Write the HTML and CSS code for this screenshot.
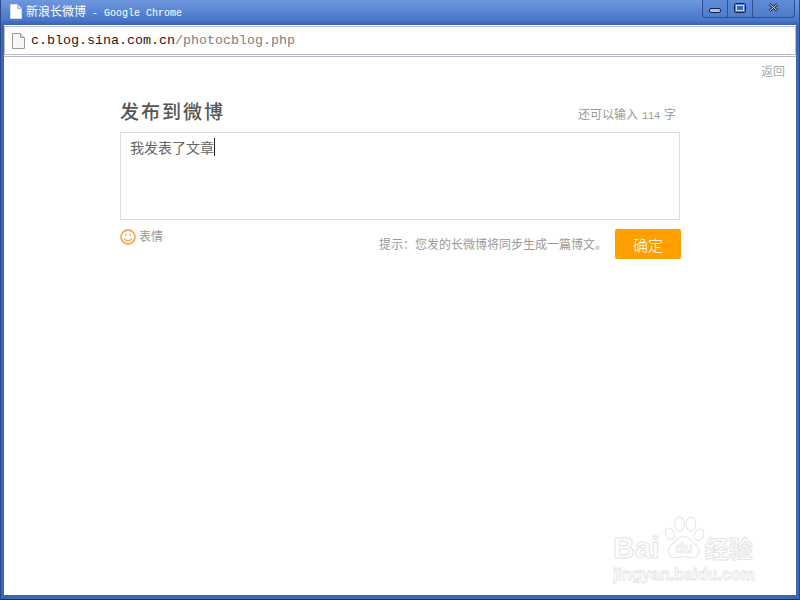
FILE: index.html
```html
<!DOCTYPE html>
<html lang="zh-CN">
<head>
<meta charset="utf-8">
<title>新浪长微博 - Google Chrome</title>
<link rel="stylesheet" href="styles.css">
</head>
<body>
<div class="window">
  <header class="titlebar">
    <svg class="page-icon" width="12" height="15" viewBox="0 0 12 15"><path d="M.5.5h7l4 4v10H.5z" fill="#fff" stroke="#d5deee"/><path d="M7.5.5v4h4" fill="#cfd6e2" stroke="#aab4c6"/></svg>
    <span class="title-text">新浪长微博<span class="title-latin"> - Google Chrome</span></span>
    <div class="controls">
      <div class="ctrl ctrl-min"><svg width="12" height="5" viewBox="0 0 12 5"><rect x=".5" y=".5" width="11" height="4" rx="1.5" fill="#a9c0e8" stroke="#14264f"/></svg></div>
      <div class="ctrl ctrl-max"><svg width="12" height="10" viewBox="0 0 12 10"><rect x=".5" y=".5" width="11" height="9" rx="1" fill="none" stroke="#14264f"/><rect x="2.5" y="2.5" width="7" height="5" fill="#3f68b5" stroke="#c9d8f2"/></svg></div>
      <div class="ctrl ctrl-close"><svg width="11" height="9" viewBox="0 0 11 9"><path d="M1.5 1l8 7M9.5 1l-8 7" fill="none" stroke="#14264f" stroke-width="2.6"/><path d="M1.5 1l8 7M9.5 1l-8 7" fill="none" stroke="#dfe8f8" stroke-width="1"/></svg></div>
    </div>
  </header>
  <div class="addressbar">
    <div class="omnibox">
      <svg class="doc-icon" width="13" height="16" viewBox="0 0 13 16"><path d="M.5.5h8l4 4v11H.5z" fill="#f6f6f6" stroke="#9a9a9a"/><path d="M8.5.5v4h4" fill="#ddd" stroke="#9a9a9a"/></svg>
      <span class="url"><span class="url-host">c.blog.sina.com.cn</span>/photocblog.php</span>
    </div>
  </div>
  <main class="content">
    <div class="back-row"><a class="back">返回</a></div>
    <section class="panel">
      <div class="panel-head">
        <h1 class="panel-title">发布到微博</h1>
        <span class="counter">还可以输入<span class="mono">114</span>字</span>
      </div>
      <div class="editor"><span class="editor-text">我发表了文章</span></div>
      <div class="panel-foot">
        <div class="emote">
          <svg width="16" height="16" viewBox="0 0 16 16"><circle cx="8" cy="8" r="7" fill="#fff" stroke="#f7ae4f" stroke-width="1.8"/><circle cx="5.6" cy="6.2" r=".9" fill="#f7ae4f"/><circle cx="10.4" cy="6.2" r=".9" fill="#f7ae4f"/><path d="M4.2 9.2c1 3 6.6 3 7.6 0" fill="none" stroke="#f7ae4f" stroke-width="1.2"/></svg>
          <span class="emote-label">表情</span>
        </div>
        <div class="submit-group">
          <span class="hint">提示：您发的长微博将同步生成一篇博文。</span>
          <button class="confirm">确定</button>
        </div>
      </div>
    </section>
    <div class="watermark">
      <div class="wm-top">
        <span class="wm-bai">Bai</span>
        <svg class="wm-paw" width="44" height="50" viewBox="0 0 50 54"><g fill="#fff" stroke="#e6e6e6" stroke-width="1.2"><ellipse cx="9" cy="20" rx="5" ry="7" transform="rotate(-25 9 20)"/><ellipse cx="20" cy="9" rx="5.5" ry="8"/><ellipse cx="33" cy="9" rx="5.5" ry="8"/><ellipse cx="42" cy="21" rx="5" ry="7" transform="rotate(25 42 21)"/><path d="M25 23c7 0 9 6 14 10 6 5 3 14-5 14-4 0-6-1-9-1s-6 1-10 1c-8 0-10-9-5-14 5-3 7-10 15-10z"/></g><text x="25" y="42" text-anchor="middle" class="wm-du">du</text></svg>
        <span class="wm-cjk">经验</span>
      </div>
      <div class="wm-url">jingyan.baidu.com</div>
    </div>
  </main>
</div>
</body>
</html>
```
FILE: styles.css
```css
* { box-sizing: border-box; }
html, body { margin: 0; padding: 0; }
body {
  width: 800px;
  height: 600px;
  overflow: hidden;
  font-family: "Noto Sans CJK SC", "Liberation Sans", sans-serif;
}
.window {
  width: 800px;
  height: 600px;
  display: flex;
  flex-direction: column;
  background: #3d66b4;
  padding: 0 4px 4px;
  border-left: 1px solid #2a4a8a;
  border-right: 1px solid #2a4a8a;
  border-bottom: 1px solid #1f2f55;
  position: relative;
}
.titlebar {
  height: 25px;
  margin: 0 -4px;
  padding: 3px 4px 0 9px;
  background: linear-gradient(#6e97dc 0, #5a88d6 40%, #4a78c8 80%, #3a62b0 100%);
  display: flex;
  align-items: flex-start;
  flex: none;
}
.page-icon { flex: none; margin-top: 1px; }
.title-text {
  margin-left: 4px;
  color: #fff;
  font-size: 12px;
  line-height: 16px;
  white-space: pre;
}
.title-latin { font-family: "Liberation Mono", monospace; font-size: 10px; }
.controls {
  margin: -3px 0 0 auto;
  display: flex;
  height: 18px;
  width: 93px;
  border: 1px solid #2f4f92;
  border-top: 0;
  border-radius: 0 0 4px 4px;
  background: linear-gradient(#5f8bd8, #4f7cc9);
}
.ctrl { display: flex; align-items: center; justify-content: center; border-right: 1px solid #2f4f92; }
.ctrl-min { width: 25px; padding-top: 4px; }
.ctrl-max { width: 25px; padding-bottom: 2px; }
.ctrl-close { flex: 1; border-right: 0; padding-bottom: 2px; }
.addressbar {
  height: 32px;
  flex: none;
  padding: 1px 0 0;
  margin: 0 -1px;
  background: #fff;
  border-bottom: 1px solid #b4b8c0;
}
.omnibox {
  height: 29px;
  background: #fff;
  border: 1px solid #b8bcc4;
  display: flex;
  align-items: center;
  padding-left: 7px;
}
.doc-icon { flex: none; }
.url {
  margin-left: 6px;
  font-family: "Liberation Mono", monospace;
  font-size: 13.33px;
  color: #808080;
}
.url-host { color: #1a1a1a; }
.content {
  flex: 1;
  margin: 0 -1px;
  background: #fff;
  min-height: 0;
  position: relative;
}
.back-row {
  display: flex;
  justify-content: flex-end;
  padding: 6px 11px 0 0;
  height: 45px;
}
.back { font-size: 12px; line-height: 16px; color: #aaa; }
.panel { width: 560px; margin-left: 116px; }
.panel-head {
  display: flex;
  justify-content: space-between;
  align-items: flex-end;
  height: 30px;
  padding-right: 4px;
}
.panel-title {
  margin: 0;
  font-size: 19px;
  line-height: 22px;
  letter-spacing: 2px;
  font-weight: 500;
  color: #555;
  padding-bottom: 10px;
}
.counter { font-size: 12px; line-height: 16px; color: #999; padding-bottom: 7px; }
.mono { font-family: "Liberation Mono", monospace; font-size: 10px; margin: 0 4px; }
.editor {
  height: 88px;
  border: 1px solid #ddd;
  padding: 5px 9px;
  font-size: 14px;
  line-height: 18px;
  color: #666;
}
.editor-text { border-right: 1px solid #222; display: inline-block; height: 18px; }
.panel-foot {
  display: flex;
  justify-content: space-between;
  align-items: flex-start;
  padding-top: 9px;
}
.emote {
  display: flex;
  align-items: center;
  gap: 3px;
  font-size: 12px;
  line-height: 14px;
  color: #999;
}
.emote-label { margin-top: -2px; }
.submit-group { display: flex; align-items: center; gap: 8px; margin-right: -1px; }
.hint { font-size: 12px; color: #999; line-height: 16px; }
.confirm {
  width: 66px;
  height: 30px;
  border: 0;
  border-radius: 2px;
  background: #ffa000;
  color: #fff;
  font-family: inherit;
  font-size: 15px;
  font-weight: 300;
  padding: 0;
}
.watermark {
  position: absolute;
  left: 609px;
  bottom: 12px;
  width: 150px;
  color: #fff;
}
.wm-top { display: flex; align-items: flex-end; height: 50px; }
.wm-bai, .wm-cjk {
  font-family: "Liberation Sans", sans-serif;
  font-weight: 700;
  font-size: 30px;
  line-height: 32px;
  color: #fff;
  -webkit-text-stroke: 1px #e4e4e4;
  margin-bottom: 1px;
}
.wm-cjk { font-family: "Noto Sans CJK SC", sans-serif; font-size: 24px; margin-bottom: 1px; }
.wm-paw { margin: 0 -1px 0 2px; flex: none; }
.wm-du { font: 700 16px "Liberation Sans", sans-serif; fill: #fff; stroke: #e2e2e2; stroke-width: .8; }
.wm-url {
  font: 700 16.2px/18px "Liberation Sans", sans-serif;
  color: #fff;
  -webkit-text-stroke: .8px #e4e4e4;
  white-space: nowrap;
}
```
